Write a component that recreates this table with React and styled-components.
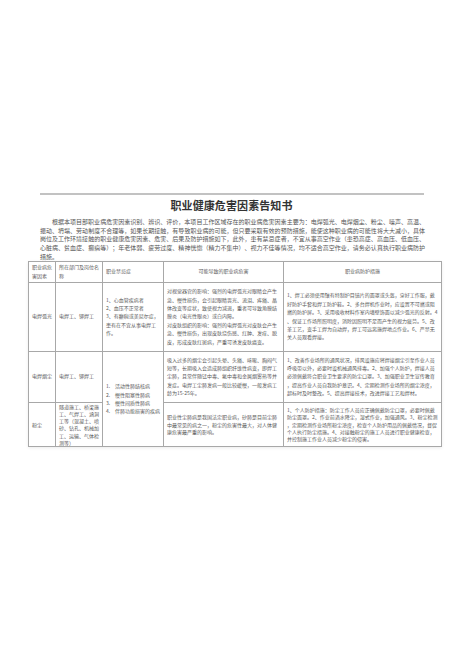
import React from 'react';
import styled, { createGlobalStyle } from 'styled-components';

const GlobalStyle = createGlobalStyle`
    html, body {
        margin: 0;
        padding: 0;
        background: #fff;
    }
    body {
        font-family: "Noto Sans CJK SC", "Noto Sans", sans-serif;
        color: #555;
    }
`;

const rows = [
    {
        factor: '电焊弧光',
        post: '电焊工、铆焊工',
        taboo: ['1、心血管疾病者', '2、血压不正常者', '3、有癫痫或美尼尔症，患有在不宜从事电焊工作。'],
        harm: [
            '对视觉器官的影响：强烈的电焊弧光对眼睛会产生急、慢性损伤，会引起眼睛畏光、流泪、疼痛、晶体改变等症状，致使视力减退，重者可导致角膜结膜炎（电光性眼炎）或白内障。',
            '对皮肤组织的影响：强烈的电焊弧光对皮肤会产生急、慢性损伤，出现皮肤烧伤感、红肿、发痒、脱皮，形成皮肤红斑病，严重可诱发皮肤癌变。',
        ],
        guard: '1、焊工必须使用镶有特制护目镜片的面罩或头盔，穿好工作服，戴好防护手套和焊工防护鞋。2、多台焊机作业时，应设置不可燃或阻燃的防护屏。3、采用吸收材料作室内墙壁饰面以减少弧光的反射。4、保证工作场所照明度，消除因照明不足而产生的视力疲劳。5、改革工艺，变手工焊为自动焊，焊工可远离施焊地点作业。6、严禁无关人员观看焊接。',
        height: 69,
        lh: 8.4,
    },
    {
        factor: '电焊烟尘',
        post: '电焊工、铆焊工',
        taboo: null,
        harm: [
            '吸入过多的烟尘会引起头晕、头痛、咳嗽、胸闷气短等，长期吸入会造成肺组织纤维性病变，即焊工尘肺，且常伴随锰中毒、氟中毒和金属烟雾热等并发症。电焊工尘肺发病一般比较缓慢，一般发病工龄为15-25年。',
        ],
        guard: '1、改善作业场所的通风状况，排风设施应将焊接烟尘引至作业人员呼吸带以外，必要时设机械通风排毒。2、加强个人防护，焊接人员必须佩戴符合职业卫生要求的防尘口罩。3、加强职业卫生宣传教育，提高作业人员自我防护意识。4、定期检测作业场所的烟尘浓度，超标时及时整改。5、提高焊接技术，改进焊接工艺和焊材。',
        height: 51,
        lh: 8.3,
    },
    {
        factor: '粉尘',
        post: '隧道施工、桥梁施工、气焊工、涵洞工等（混凝土、喷砂、钻孔、机械加工、运输、气体检测等）',
        taboo: null,
        harm: ['职业性尘肺病是我国法定职业病，矽肺是目前尘肺中最常见的病之一，粉尘的危害性最大，对人体健康危害最严重的影响。'],
        guard: '1、个人防护措施：防尘工作人员应正确佩戴防尘口罩，必要时佩戴防尘面罩。2、作业前洒水降尘，湿式作业，加强通风。3、粉尘检测，定期检测作业场所粉尘浓度，检查个人防护用品的佩戴情况，督促个人执行防尘措施。4、对接触粉尘的施工人员进行职业健康检查，并控制施工作业人员减少粉尘的侵害。',
        height: 44,
        lh: 7.3,
    },
];

const dustTaboo = ['活动性肺结核病', '慢性阻塞性肺病', '慢性间质性肺病', '伴肺功能损害的疾病'];

function App() {
    return (
        <>
            <GlobalStyle />
            <Page>
                <Rule />
                <Title>职业健康危害因素告知书</Title>
                <Intro>
                    根据本项目部职业病危害因素识别、辨识、评价，本项目工作区域存在的职业病危害因素主要为：电焊弧光、电焊烟尘、粉尘、噪声、高温、振动、坍塌、劳动制度不合理等，如果长期接触，有导致职业病的可能，但只要采取有效的预防措施，能使这种职业病的可能性将大大减小，具体岗位及工作环境接触的职业健康危害因素、危害、后果及防护措施如下，此外，患有禁忌症者，不宜从事高空作业（患恐高症、高血压、低血压、心脏病、贫血症、癫痫等）；年老体弱、疲劳过度、精神恍惚（精力不集中）、视力不佳等情况，均不适合高空作业，请务必认真执行职业病防护措施。
                </Intro>
                <Sheet>
                    <colgroup>
                        <col style={{ width: 27 }} />
                        <col style={{ width: 47 }} />
                        <col style={{ width: 61 }} />
                        <col style={{ width: 120 }} />
                        <col style={{ width: 158 }} />
                    </colgroup>
                    <tbody>
                        <Row $h={21} $lh={8.5}>
                            <Cell>职业病危害因素</Cell>
                            <Cell>所在部门及岗位名称</Cell>
                            <Cell>职业禁忌症</Cell>
                            <Cell $align="center">可能导致的职业病危害</Cell>
                            <Cell $align="center">职业病防护措施</Cell>
                        </Row>
                        {rows.map((r, i) => (
                            <Row key={r.factor} $h={r.height} $lh={r.lh}>
                                <Cell>{r.factor}</Cell>
                                <Cell>{r.post}</Cell>
                                {i === 0 && (
                                    <Cell>
                                        {r.taboo.map((t) => (
                                            <div key={t}>{t}</div>
                                        ))}
                                    </Cell>
                                )}
                                {i === 1 && (
                                    <Cell rowSpan={2}>
                                        {dustTaboo.map((t, n) => (
                                            <ListItem key={t}>
                                                <Num>{n + 1}.</Num>
                                                {t}
                                            </ListItem>
                                        ))}
                                    </Cell>
                                )}
                                <Cell>
                                    {r.harm.map((h) => (
                                        <div key={h}>{h}</div>
                                    ))}
                                </Cell>
                                <Cell>{r.guard}</Cell>
                            </Row>
                        ))}
                    </tbody>
                </Sheet>
            </Page>
        </>
    );
}

const Page = styled.div`
    width: 463px;
    min-height: 655px;
    padding-top: 193px;
    box-sizing: border-box;
    display: flex;
    flex-direction: column;
`;

const Rule = styled.div`
    height: 2px;
    margin: 0 39px 0 40px;
    background: #c2c2c2;
`;

const Title = styled.h1`
    margin: 3px 0 0;
    font-size: 11px;
    line-height: 14px;
    font-weight: 700;
    color: #333;
    text-align: center;
    letter-spacing: 0.1px;
`;

const Intro = styled.p`
    margin: 6px 38px 0 40px;
    font-size: 6px;
    line-height: 8.7px;
    text-indent: 12px;
    text-align: justify;
    color: #555;
    line-break: anywhere;
    text-spacing-trim: space-all;
`;

const Sheet = styled.table`
    margin: -1px 0 0 28px;
    width: 413px;
    table-layout: fixed;
    border-collapse: collapse;
    border: 1px solid #a0a0a0;
    box-shadow: 0 1px 3px rgba(0, 0, 0, 0.08);
`;

const Row = styled.tr`
    height: ${(p) => p.$h}px;
    line-height: ${(p) => p.$lh}px;
`;

const Cell = styled.td`
    border: 1px solid #a8a8a8;
    padding: 0 3px;
    font-size: 5px;
    color: #5a5a5a;
    vertical-align: middle;
    text-align: ${(p) => p.$align || 'left'};
    line-break: anywhere;
    text-spacing-trim: space-all;
`;

const ListItem = styled.div`
    display: flex;
`;

const Num = styled.span`
    width: 9px;
    flex-shrink: 0;
`;

export default App;
